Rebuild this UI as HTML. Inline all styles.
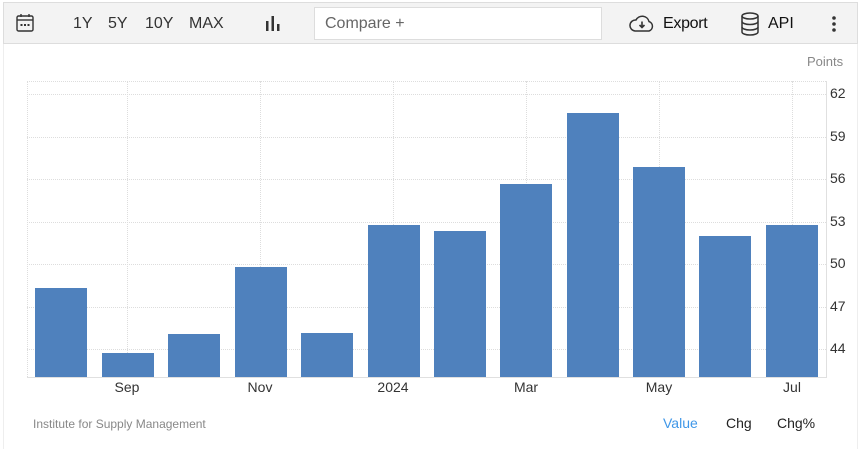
<!DOCTYPE html>
<html><head><meta charset="utf-8"><style>
*{margin:0;padding:0;box-sizing:border-box}
body{width:859px;height:449px;background:#fff;font-family:"Liberation Sans",Arial,sans-serif;position:relative;overflow:hidden;color:#333}
.t{position:absolute;white-space:nowrap}
#bar{position:absolute;left:3px;top:2px;width:855px;height:42px;background:#f3f3f3;border:1px solid #ddd}
#frame{position:absolute;left:3px;top:44px;width:855px;height:405px;border-left:1px solid #eee;border-right:1px solid #eee}
.bar{position:absolute;background:#4f81bd;width:52px}
.hg{position:absolute;left:27px;width:799px;border-top:1px dotted #ddd;height:0}
.vg{position:absolute;top:81px;height:296px;border-left:1px dotted #ddd;width:0}
.yl{position:absolute;left:830px;font-size:14px;color:#333}
.xl{position:absolute;top:379px;font-size:14px;color:#333;transform:translateX(-50%)}
</style></head><body>
<div id="frame"></div>
<div id="bar"></div>
<svg style="position:absolute;left:16px;top:13px" width="18" height="20" viewBox="0 0 18 20"><rect x="1" y="3" width="16" height="15" rx="1.5" fill="none" stroke="#333" stroke-width="1.4"/><line x1="1" y1="7" x2="17" y2="7" stroke="#333" stroke-width="1.4"/><line x1="5" y1="1" x2="5" y2="4" stroke="#333" stroke-width="1.4"/><line x1="13" y1="1" x2="13" y2="4" stroke="#333" stroke-width="1.4"/><rect x="4.5" y="11" width="2" height="2" fill="#333"/><rect x="8" y="11" width="2" height="2" fill="#333"/><rect x="11.5" y="11" width="2" height="2" fill="#333"/></svg>
<div class="t" style="left:73px;top:15px;font-size:16px">1Y</div>
<div class="t" style="left:108px;top:15px;font-size:16px">5Y</div>
<div class="t" style="left:145px;top:15px;font-size:16px">10Y</div>
<div class="t" style="left:189px;top:15px;font-size:16px">MAX</div>
<svg style="position:absolute;left:265px;top:15px" width="16" height="16"><rect x="1" y="6" width="2.5" height="10" fill="#333"/><rect x="6.5" y="1" width="2.5" height="15" fill="#333"/><rect x="12" y="9" width="2.5" height="7" fill="#333"/></svg>
<div style="position:absolute;left:314px;top:7px;width:288px;height:33px;background:#fff;border:1px solid #ddd"></div>
<div class="t" style="left:325px;top:15px;font-size:16px;color:#666">Compare +</div>
<svg style="position:absolute;left:629px;top:14px" width="26" height="20" viewBox="0 0 26 20"><path d="M6 17 H20 A5 5 0 0 0 20 7.5 A7 7 0 0 0 7 6 A5.5 5.5 0 0 0 6 17 Z" fill="none" stroke="#333" stroke-width="1.5"/><path d="M13 7.5 V13 M10.5 11 L13 13.5 L15.5 11" fill="none" stroke="#333" stroke-width="1.6"/></svg>
<div class="t" style="left:663px;top:15px;font-size:16px;color:#111;letter-spacing:-0.3px">Export</div>
<svg style="position:absolute;left:740px;top:12px" width="20" height="24" viewBox="0 0 20 24"><g fill="none" stroke="#333" stroke-width="1.5"><ellipse cx="10" cy="4" rx="8" ry="3"/><path d="M2 4 V20 A8 3 0 0 0 18 20 V4"/><path d="M2 9.5 A8 3 0 0 0 18 9.5"/><path d="M2 15 A8 3 0 0 0 18 15"/></g></svg>
<div class="t" style="left:768px;top:15px;font-size:16px;color:#111">API</div>
<svg style="position:absolute;left:831px;top:15px" width="6" height="18"><circle cx="3" cy="3" r="1.8" fill="#333"/><circle cx="3" cy="9" r="1.8" fill="#333"/><circle cx="3" cy="15" r="1.8" fill="#333"/></svg>
<div class="t" style="left:807px;top:54px;font-size:13px;color:#888">Points</div>
<div class="hg" style="top:81px"></div>
<div class="hg" style="top:94px"></div><div class="hg" style="top:137px"></div><div class="hg" style="top:179px"></div><div class="hg" style="top:222px"></div><div class="hg" style="top:264px"></div><div class="hg" style="top:307px"></div><div class="hg" style="top:349px"></div>
<div class="vg" style="left:27px"></div>
<div class="vg" style="left:127px"></div><div class="vg" style="left:260px"></div><div class="vg" style="left:393px"></div><div class="vg" style="left:526px"></div><div class="vg" style="left:659px"></div><div class="vg" style="left:792px"></div>
<div style="position:absolute;left:826px;top:81px;width:1px;height:297px;background:#e0e0e0"></div>
<div style="position:absolute;left:27px;top:377px;width:800px;height:1px;background:#e0e0e0"></div>
<div class="bar" style="left:35px;top:288px;height:89px"></div>
<div class="bar" style="left:102px;top:353px;height:24px"></div>
<div class="bar" style="left:168px;top:334px;height:43px"></div>
<div class="bar" style="left:235px;top:267px;height:110px"></div>
<div class="bar" style="left:301px;top:333px;height:44px"></div>
<div class="bar" style="left:368px;top:225px;height:152px"></div>
<div class="bar" style="left:434px;top:231px;height:146px"></div>
<div class="bar" style="left:500px;top:184px;height:193px"></div>
<div class="bar" style="left:567px;top:113px;height:264px"></div>
<div class="bar" style="left:633px;top:167px;height:210px"></div>
<div class="bar" style="left:699px;top:236px;height:141px"></div>
<div class="bar" style="left:766px;top:225px;height:152px"></div>
<div class="yl" style="top:85px">62</div><div class="yl" style="top:128px">59</div><div class="yl" style="top:170px">56</div><div class="yl" style="top:213px">53</div><div class="yl" style="top:255px">50</div><div class="yl" style="top:298px">47</div><div class="yl" style="top:340px">44</div>
<div class="xl" style="left:127px">Sep</div><div class="xl" style="left:260px">Nov</div><div class="xl" style="left:393px">2024</div><div class="xl" style="left:526px">Mar</div><div class="xl" style="left:659px">May</div><div class="xl" style="left:792px">Jul</div>
<div class="t" style="left:33px;top:417px;font-size:12px;color:#888">Institute for Supply Management</div>
<div class="t" style="left:663px;top:415px;font-size:14px;color:#3f97e8">Value</div>
<div class="t" style="left:726px;top:415px;font-size:14px;color:#222">Chg</div>
<div class="t" style="left:777px;top:415px;font-size:14px;color:#222">Chg%</div>
</body></html>
